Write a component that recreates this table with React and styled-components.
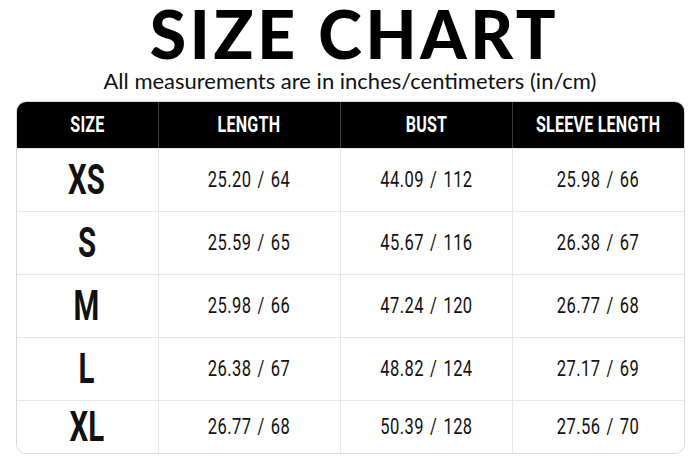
import styled, { createGlobalStyle } from "styled-components";

const GlobalStyle = createGlobalStyle`
  html, body {
    margin: 0;
    padding: 0;
    background: #ffffff;
  }
  * {
    box-sizing: border-box;
  }
`;

const Page = styled.div`
  width: 700px;
  height: 467px;
  display: flex;
  flex-direction: column;
  align-items: center;
  background: #fff;
  overflow: hidden;
`;

const Title = styled.h1`
  margin: 0;
  padding-left: 9px;
  font-family: "Lato", "Liberation Sans", sans-serif;
  font-weight: 900;
  font-size: 66px;
  line-height: 68px;
  letter-spacing: 3.7px;
  color: #000;
`;

const Subtitle = styled.p`
  margin: 0;
  font-family: "Lato", "Liberation Sans", sans-serif;
  font-size: 22px;
  line-height: 26px;
  color: #111;
`;

const Table = styled.div`
  margin-top: 7px;
  width: 669px;
  border: 1px solid #d9d9d9;
  border-radius: 10px;
  overflow: hidden;
  font-family: "Roboto", "Liberation Sans", sans-serif;
`;

const Row = styled.div`
  display: grid;
  grid-template-columns: 141px 182px 172px 1fr;
  height: ${(p) => p.$h}px;
  background: ${(p) => (p.$head ? "#000" : "#fff")};
  border-top: ${(p) => (p.$first ? "none" : "1px solid #e6e6e6")};
`;

const Cell = styled.div`
  display: flex;
  align-items: center;
  justify-content: center;
  border-left: ${(p) =>
    p.$first ? "none" : p.$head ? "1.5px solid #3c3c3c" : "1px solid #e6e6e6"};
  color: ${(p) => (p.$head ? "#fff" : "#111")};
  white-space: nowrap;
`;

const Label = styled.span`
  display: inline-block;
  font-weight: ${(p) => (p.$kind === "data" ? 400 : 700)};
  font-size: ${(p) => (p.$kind === "size" ? "42px" : "22px")};
  transform: scaleX(${(p) => (p.$kind === "size" ? 0.7 : p.$kind === "head" ? 0.73 : 0.75)});
  letter-spacing: ${(p) => (p.$kind === "data" ? "0.6px" : "0.3px")};
  word-spacing: ${(p) => (p.$kind === "data" ? "2px" : "0")};
  line-height: 1;
`;

const headers = ["SIZE", "LENGTH", "BUST", "SLEEVE LENGTH"];

const rows = [
  ["XS", "25.20 / 64", "44.09 / 112", "25.98 / 66"],
  ["S", "25.59 / 65", "45.67 / 116", "26.38 / 67"],
  ["M", "25.98 / 66", "47.24 / 120", "26.77 / 68"],
  ["L", "26.38 / 67", "48.82 / 124", "27.17 / 69"],
  ["XL", "26.77 / 68", "50.39 / 128", "27.56 / 70"],
];

export default function App() {
  return (
    <Page>
      <GlobalStyle />
      <Title>SIZE CHART</Title>
      <Subtitle>All measurements are in inches/centimeters (in/cm)</Subtitle>
      <Table>
        <Row $head $first $h={46}>
          {headers.map((h, i) => (
            <Cell key={h} $head $first={i === 0}>
              <Label $kind="head">{h}</Label>
            </Cell>
          ))}
        </Row>
        {rows.map((r, ri) => (
          <Row key={r[0]} $h={ri === rows.length - 1 ? 53 : 63}>
            {r.map((v, i) => (
              <Cell key={i} $first={i === 0}>
                <Label $kind={i === 0 ? "size" : "data"}>{v}</Label>
              </Cell>
            ))}
          </Row>
        ))}
      </Table>
    </Page>
  );
}
